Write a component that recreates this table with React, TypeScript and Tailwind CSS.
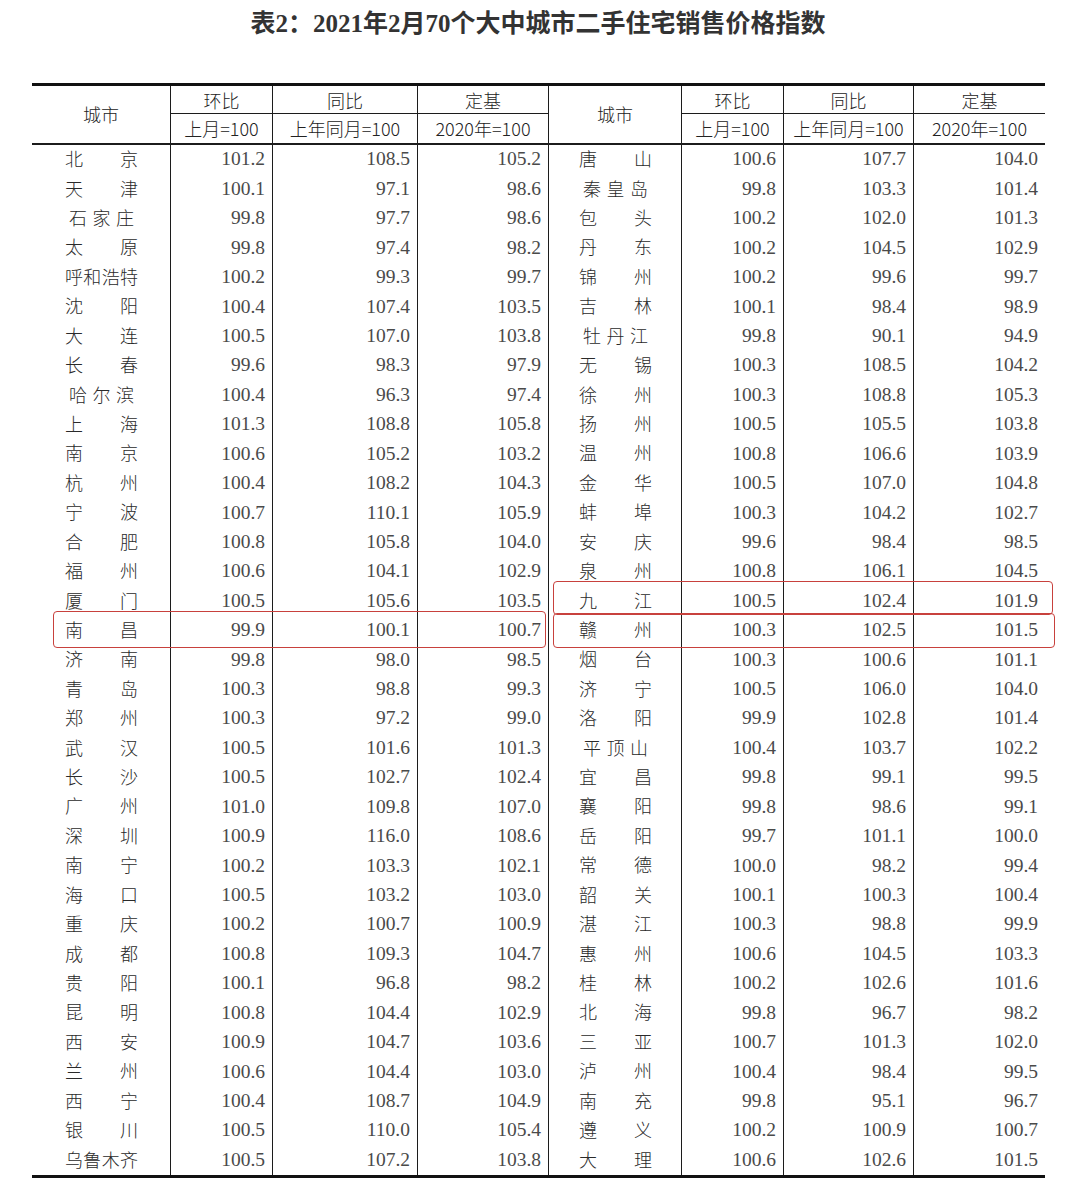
import React from "react";

type Row = [string, string, string, string];

const left: Row[] = [
  ["北京", "101.2", "108.5", "105.2"],
  ["天津", "100.1", "97.1", "98.6"],
  ["石家庄", "99.8", "97.7", "98.6"],
  ["太原", "99.8", "97.4", "98.2"],
  ["呼和浩特", "100.2", "99.3", "99.7"],
  ["沈阳", "100.4", "107.4", "103.5"],
  ["大连", "100.5", "107.0", "103.8"],
  ["长春", "99.6", "98.3", "97.9"],
  ["哈尔滨", "100.4", "96.3", "97.4"],
  ["上海", "101.3", "108.8", "105.8"],
  ["南京", "100.6", "105.2", "103.2"],
  ["杭州", "100.4", "108.2", "104.3"],
  ["宁波", "100.7", "110.1", "105.9"],
  ["合肥", "100.8", "105.8", "104.0"],
  ["福州", "100.6", "104.1", "102.9"],
  ["厦门", "100.5", "105.6", "103.5"],
  ["南昌", "99.9", "100.1", "100.7"],
  ["济南", "99.8", "98.0", "98.5"],
  ["青岛", "100.3", "98.8", "99.3"],
  ["郑州", "100.3", "97.2", "99.0"],
  ["武汉", "100.5", "101.6", "101.3"],
  ["长沙", "100.5", "102.7", "102.4"],
  ["广州", "101.0", "109.8", "107.0"],
  ["深圳", "100.9", "116.0", "108.6"],
  ["南宁", "100.2", "103.3", "102.1"],
  ["海口", "100.5", "103.2", "103.0"],
  ["重庆", "100.2", "100.7", "100.9"],
  ["成都", "100.8", "109.3", "104.7"],
  ["贵阳", "100.1", "96.8", "98.2"],
  ["昆明", "100.8", "104.4", "102.9"],
  ["西安", "100.9", "104.7", "103.6"],
  ["兰州", "100.6", "104.4", "103.0"],
  ["西宁", "100.4", "108.7", "104.9"],
  ["银川", "100.5", "110.0", "105.4"],
  ["乌鲁木齐", "100.5", "107.2", "103.8"],
];

const right: Row[] = [
  ["唐山", "100.6", "107.7", "104.0"],
  ["秦皇岛", "99.8", "103.3", "101.4"],
  ["包头", "100.2", "102.0", "101.3"],
  ["丹东", "100.2", "104.5", "102.9"],
  ["锦州", "100.2", "99.6", "99.7"],
  ["吉林", "100.1", "98.4", "98.9"],
  ["牡丹江", "99.8", "90.1", "94.9"],
  ["无锡", "100.3", "108.5", "104.2"],
  ["徐州", "100.3", "108.8", "105.3"],
  ["扬州", "100.5", "105.5", "103.8"],
  ["温州", "100.8", "106.6", "103.9"],
  ["金华", "100.5", "107.0", "104.8"],
  ["蚌埠", "100.3", "104.2", "102.7"],
  ["安庆", "99.6", "98.4", "98.5"],
  ["泉州", "100.8", "106.1", "104.5"],
  ["九江", "100.5", "102.4", "101.9"],
  ["赣州", "100.3", "102.5", "101.5"],
  ["烟台", "100.3", "100.6", "101.1"],
  ["济宁", "100.5", "106.0", "104.0"],
  ["洛阳", "99.9", "102.8", "101.4"],
  ["平顶山", "100.4", "103.7", "102.2"],
  ["宜昌", "99.8", "99.1", "99.5"],
  ["襄阳", "99.8", "98.6", "99.1"],
  ["岳阳", "99.7", "101.1", "100.0"],
  ["常德", "100.0", "98.2", "99.4"],
  ["韶关", "100.1", "100.3", "100.4"],
  ["湛江", "100.3", "98.8", "99.9"],
  ["惠州", "100.6", "104.5", "103.3"],
  ["桂林", "100.2", "102.6", "101.6"],
  ["北海", "99.8", "96.7", "98.2"],
  ["三亚", "100.7", "101.3", "102.0"],
  ["泸州", "100.4", "98.4", "99.5"],
  ["南充", "99.8", "95.1", "96.7"],
  ["遵义", "100.2", "100.9", "100.7"],
  ["大理", "100.6", "102.6", "101.5"],
];

const cjk = "font-['Noto_Sans_CJK_SC',sans-serif]";
const num = "font-['Liberation_Serif','Noto_Sans_CJK_SC',serif]";
const vline = "border-l-[1.5px] border-[#1c1c1c]";
const cols =
  "grid grid-cols-[138px_102px_145px_131px_133px_102px_130px_132px]";

function CityName({ name, side }: { name: string; side: "l" | "r" }) {
  const chars = name.split("");
  const outer = side === "l" ? "ml-[33px]" : "ml-[30px]";
  let inner = "w-[73px] justify-between";
  if (chars.length === 3) inner = "w-[65px] justify-between mx-auto";
  return (
    <div className={`${outer} w-[73px] flex pb-[3px]`}>
      <div
        className={`flex ${inner} ${cjk} text-[18px] font-light leading-none text-[#2a2a2a]`}
      >
        {chars.map((c, i) => (
          <span key={i}>{c}</span>
        ))}
      </div>
    </div>
  );
}

function NumCell({ v }: { v: string }) {
  return (
    <div
      className={`flex items-center justify-end pr-[7px] pb-[1px] ${vline} ${num} text-[19.5px] text-[#4a4a4a] leading-none`}
    >
      {v}
    </div>
  );
}

export default function App() {
  return (
    <div className="w-[1080px] h-[1201px] bg-white relative overflow-hidden">
      <div className="h-[46px] flex items-center justify-center pr-[4px]">
        <h1
          className={`font-['Liberation_Serif','Noto_Sans_CJK_SC',serif] font-bold text-[25px] text-[#333] leading-none`}
        >
          表2：2021年2月70个大中城市二手住宅销售价格指数
        </h1>
      </div>

      <div className="ml-[32px] mt-[37px] w-[1013px] border-t-[3px] border-b-[3px] border-[#111]">
        <div
          className={`${cols} grid-rows-[27px_30px] border-b-[2px] border-[#1c1c1c] ${cjk} text-[18px] font-light text-[#222] leading-none`}
        >
          <div className="row-span-2 flex items-center justify-center pb-[1px]">
            城市
          </div>
          <div className={`${vline} flex items-center justify-center`}>环比</div>
          <div className={`${vline} flex items-center justify-center`}>同比</div>
          <div className={`${vline} flex items-center justify-center`}>定基</div>
          <div className={`${vline} row-span-2 flex items-center justify-center pb-[1px]`}>
            城市
          </div>
          <div className={`${vline} flex items-center justify-center`}>环比</div>
          <div className={`${vline} flex items-center justify-center`}>同比</div>
          <div className={`${vline} flex items-center justify-center`}>定基</div>

          <div className={`${vline} border-t-[1.5px] flex items-center justify-center pb-[2px]`}>
            上月=100
          </div>
          <div className={`${vline} border-t-[1.5px] flex items-center justify-center pb-[2px]`}>
            上年同月=100
          </div>
          <div className={`${vline} border-t-[1.5px] flex items-center justify-center pb-[2px]`}>
            2020年=100
          </div>
          <div className={`${vline} border-t-[1.5px] flex items-center justify-center pb-[2px]`}>
            上月=100
          </div>
          <div className={`${vline} border-t-[1.5px] flex items-center justify-center pb-[2px]`}>
            上年同月=100
          </div>
          <div className={`${vline} border-t-[1.5px] flex items-center justify-center pb-[2px]`}>
            2020年=100
          </div>
        </div>

        {left.map((l, i) => {
          const r = right[i];
          return (
            <div key={i} className={`${cols} h-[29.43px]`}>
              <div className="flex items-center">
                <CityName name={l[0]} side="l" />
              </div>
              <NumCell v={l[1]} />
              <NumCell v={l[2]} />
              <NumCell v={l[3]} />
              <div className={`${vline} flex items-center`}>
                <CityName name={r[0]} side="r" />
              </div>
              <NumCell v={r[1]} />
              <NumCell v={r[2]} />
              <NumCell v={r[3]} />
            </div>
          );
        })}
      </div>

      <div className="absolute left-[53px] top-[611px] w-[493px] h-[37px] border-[1.5px] border-[#c8413d] rounded-[4px]" />
      <div className="absolute left-[553px] top-[581px] w-[500px] h-[34px] border-[1.5px] border-[#c8413d] rounded-[4px]" />
      <div className="absolute left-[553px] top-[613px] w-[502px] h-[35px] border-[1.5px] border-[#c8413d] rounded-[4px]" />
    </div>
  );
}
